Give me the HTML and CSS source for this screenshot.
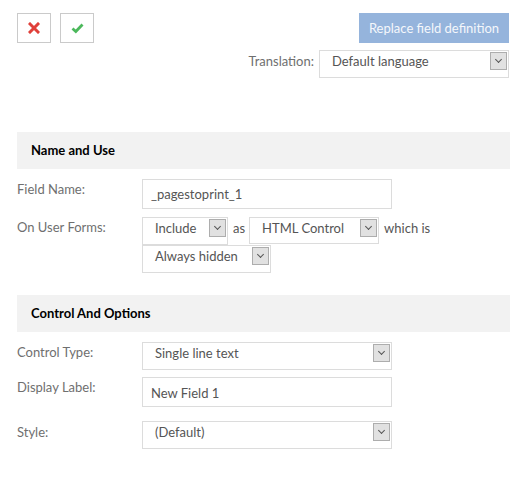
FILE: index.html
```html
<!DOCTYPE html>
<html>
<head>
<meta charset="utf-8">
<link rel="stylesheet" href="styles.css">
</head>
<body>
<div class="page">
  <div class="toolbar">
    <div class="icon-btns">
      <button class="icon-btn" type="button">
        <svg width="12" height="12" viewBox="0 0 12 12"><path d="M2 2 L10 10 M10 2 L2 10" stroke="#e0403a" stroke-width="3" stroke-linecap="square"/></svg>
      </button>
      <button class="icon-btn" type="button">
        <svg width="13" height="12" viewBox="0 0 13 12"><path d="M1.5 6.5 L4.8 9.5 L11.5 2.5" fill="none" stroke="#4cb85c" stroke-width="2.8"/></svg>
      </button>
    </div>
    <div class="right-col">
      <button class="primary" type="button">Replace field definition</button>
      <div class="translation">
        <span class="lbl">Translation:</span>
        <div class="sel sel-trans"><span>Default language</span><i class="arrow"></i></div>
      </div>
    </div>
  </div>

  <div class="section-head">Name and Use</div>
  <div class="row r-name">
    <div class="label">Field Name:</div>
    <div class="input in-wide">_pagestoprint_1</div>
  </div>
  <div class="row r-forms">
    <div class="label">On User Forms:</div>
    <div class="ctrls">
      <div class="line">
        <div class="sel sel-include"><span>Include</span><i class="arrow"></i></div>
        <span class="word">as</span>
        <div class="sel sel-html"><span>HTML Control</span><i class="arrow"></i></div>
        <span class="word">which is</span>
      </div>
      <div class="sel sel-hidden"><span>Always hidden</span><i class="arrow"></i></div>
    </div>
  </div>

  <div class="section-head head2">Control And Options</div>
  <div class="row r-ctype">
    <div class="label">Control Type:</div>
    <div class="sel sel-wide"><span>Single line text</span><i class="arrow"></i></div>
  </div>
  <div class="row r-dlabel">
    <div class="label">Display Label:</div>
    <div class="input in-wide">New Field 1</div>
  </div>
  <div class="row r-style">
    <div class="label lbl-style">Style:</div>
    <div class="sel sel-wide"><span>(Default)</span><i class="arrow"></i></div>
  </div>
</div>
</body>
</html>
```

FILE: styles.css
```css
* { box-sizing: border-box; }
html, body { margin: 0; padding: 0; background: #fff; }
body {
  font-family: "Lato", "Open Sans", sans-serif;
  font-size: 13px;
  color: #555;
}
.page {
  width: 493px;
  margin-left: 17px;
  padding-top: 13px;
}
.toolbar {
  display: flex;
  justify-content: space-between;
  align-items: flex-start;
  height: 119px;
}
.icon-btns { display: flex; gap: 9px; }
.icon-btn {
  width: 34px;
  height: 30px;
  border: 1px solid #cacaca;
  background: #fff;
  display: flex;
  align-items: center;
  justify-content: center;
  padding: 0;
}
.right-col {
  display: flex;
  flex-direction: column;
  align-items: flex-end;
  padding-right: 1px;
}
.primary {
  width: 150px;
  height: 30px;
  border: none;
  background: #95b4dc;
  color: #f4f7fb;
  font-family: inherit;
  font-size: 13px;
  padding: 0;
}
.translation {
  display: flex;
  align-items: flex-start;
  margin-top: 7px;
}
.translation .lbl {
  margin-right: 5px;
  line-height: 22px;
  color: #6f6f6f;
}
.sel {
  position: relative;
  border: 1px solid #dcdcdc;
  background: #fff;
  padding-left: 12px;
  line-height: 20px;
  padding-top: 0;
  color: #555;
}
.arrow {
  position: absolute;
  top: 1px;
  right: 1px;
  width: 17px;
  height: 18px;
  background: #e1e1e1;
  border: 1px solid #adadad;
}
.arrow::after {
  content: "";
  position: absolute;
  left: 5px;
  top: 4px;
  width: 4px;
  height: 4px;
  border-right: 1px solid #555;
  border-bottom: 1px solid #555;
  transform: rotate(45deg);
}
.sel-trans { width: 190px; height: 28px; }
.section-head {
  height: 37px;
  background: #f2f2f2;
  color: #000;
  font-weight: bold;
  font-size: 13px;
  padding-left: 14px;
  line-height: 37px;
}
.head2 { margin-top: 22px; }
.row { display: flex; }
.label {
  width: 125px;
  flex: none;
  padding-top: 1px;
  line-height: 18px;
  color: #6f6f6f;
}
.input {
  border: 1px solid #dcdcdc;
  height: 30px;
  line-height: 28px;
  padding-left: 8px;
}
.in-wide { width: 250px; }
.r-name { margin-top: 10px; }
.r-forms { margin-top: 8px; }
.ctrls { display: flex; flex-direction: column; }
.line { display: flex; align-items: flex-start; }
.word { line-height: 22px; margin: 0 4px 0 5px; }
.sel-include { width: 86px; height: 28px; }
.sel-html { width: 130px; height: 27px; }
.sel-hidden { width: 129px; height: 28px; }
.sel-wide { width: 250px; height: 28px; }
.r-ctype { margin-top: 10px; }
.r-dlabel { margin-top: 7px; }
.r-dlabel .input { padding-top: 1px; }
.r-style { margin-top: 14px; }
.lbl-style { padding-top: 2px; }
```
